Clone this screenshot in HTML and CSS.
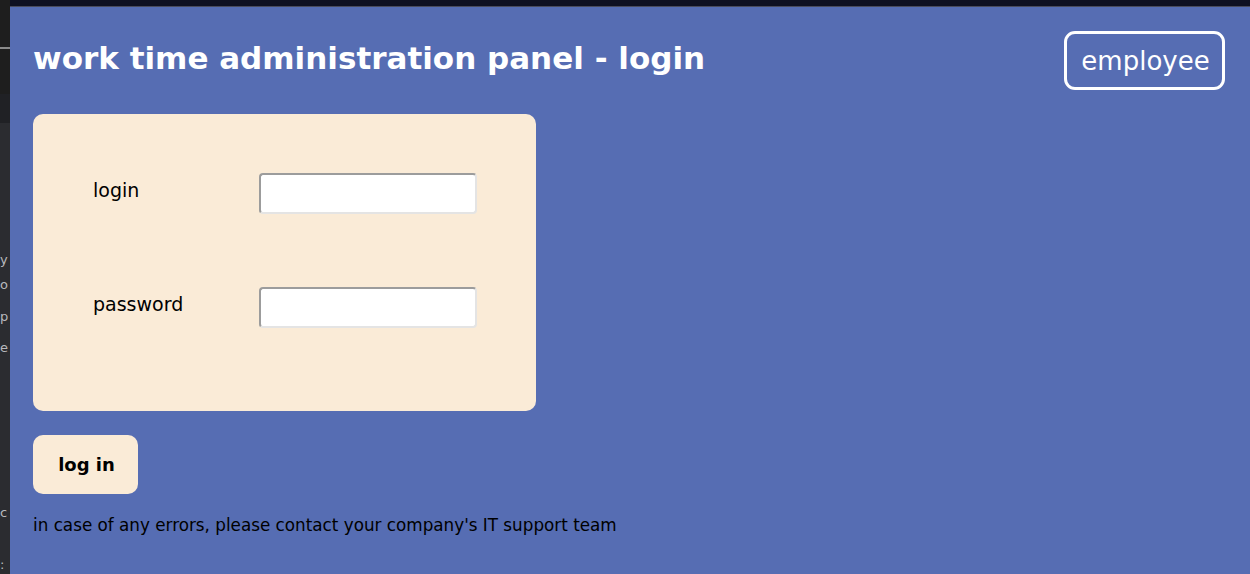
FILE: index.html
```html
<!DOCTYPE html>
<html lang="en">
<head>
<meta charset="utf-8">
<title>work time administration panel - login</title>
<link rel="stylesheet" href="styles.css">
</head>
<body>
<div class="frame">
  <aside class="backdrop">
    <div class="bd-a"></div>
    <div class="bd-b"></div>
    <div class="bd-c"></div>
    <div class="bd-d">
      <span class="frag f1">y</span>
      <span class="frag f2">o</span>
      <span class="frag f3">p</span>
      <span class="frag f4">e</span>
      <span class="frag f5">c</span>
      <span class="frag f6">:</span>
    </div>
  </aside>
  <div class="topbar"></div>
  <main class="panel">
    <header class="head">
      <h1 class="title">work time administration panel - login</h1>
      <button class="role" type="button">employee</button>
    </header>
    <form class="form">
      <div class="card">
        <label class="lbl" for="login">login</label>
        <input class="field" id="login" type="text">
        <label class="lbl" for="password">password</label>
        <input class="field" id="password" type="password">
      </div>
      <button class="submit" type="button">log in</button>
    </form>
    <p class="note">in case of any errors, please contact your company's IT support team</p>
  </main>
</div>
</body>
</html>
```

FILE: styles.css
```css
html, body {
  margin: 0;
  padding: 0;
  height: 100%;
  overflow: hidden;
}

body {
  background: #2b2c30;
  font-family: "Comic Sans MS", "DejaVu Sans", sans-serif;
}

.frame {
  display: grid;
  grid-template-columns: 10px 1fr;
  grid-template-rows: 7px 1fr;
  height: 574px;
}

.backdrop {
  grid-row: 1 / 3;
  grid-column: 1;
  display: flex;
  flex-direction: column;
  overflow: hidden;
}

.bd-a {
  height: 49px;
  background: #1e1e1e;
  border-bottom: 2px solid #8a8a8a;
}

.bd-b {
  height: 48px;
  background: #1e1e1e;
}

.bd-c {
  height: 30px;
  background: #202125;
}

.bd-d {
  flex: 1;
  background: #2b2c30;
  display: flex;
  flex-direction: column;
  align-items: flex-start;
  font-family: "DejaVu Sans", sans-serif;
  font-size: 13px;
  color: #b8b9bd;
  line-height: 18px;
}

.frag { display: block; }
.f1 { margin-top: 128px; }
.f2 { margin-top: 7px; }
.f3 { margin-top: 14px; }
.f4 { margin-top: 13px; }
.f5 { margin-top: 147px; }
.f6 { margin-top: 34px; }

.topbar {
  grid-row: 1;
  grid-column: 2;
  background: #0f1121;
  border-bottom: 1px solid #4a4c5c;
}

.panel {
  grid-row: 2;
  grid-column: 2;
  background: #566db3;
  padding: 0 25px 0 23px;
  display: flex;
  flex-direction: column;
  align-items: flex-start;
}

.head {
  align-self: stretch;
  display: flex;
  justify-content: space-between;
  align-items: center;
  padding-top: 24px;
  height: 59px;
}

.title {
  margin: 0;
  color: #fff;
  font-size: 31px;
  font-weight: bold;
  line-height: 40px;
  padding-bottom: 6px;
}

.role {
  box-sizing: border-box;
  width: 161px;
  height: 59px;
  border: 3px solid #fff;
  border-radius: 11px;
  background: transparent;
  color: #fff;
  font-family: inherit;
  font-size: 26px;
  padding: 0 0 0 2px;
}

.form {
  display: flex;
  flex-direction: column;
  align-items: flex-start;
  margin-top: 24px;
}

.card {
  box-sizing: border-box;
  width: 503px;
  height: 297px;
  background: #faebd7;
  border-radius: 10px;
  padding: 59px 59px 0 60px;
  display: grid;
  grid-template-columns: 166px 218px;
  grid-auto-rows: 41px;
  row-gap: 73px;
  align-items: center;
}

.lbl {
  font-size: 19px;
  color: #000;
  margin-top: -8px;
}

.field {
  box-sizing: border-box;
  width: 218px;
  height: 41px;
  margin: 0;
  background: #fff;
  border: 2px solid;
  border-color: #9c9c9c #e4e4e4 #e4e4e4 #9c9c9c;
  border-radius: 4px;
  font-family: inherit;
  font-size: 16px;
}

.submit {
  box-sizing: border-box;
  width: 105px;
  height: 59px;
  margin-top: 24px;
  border: 0;
  border-radius: 10px;
  background: #faebd7;
  color: #000;
  font-family: inherit;
  font-size: 18px;
  font-weight: bold;
  padding: 0 0 0 2px;
}

.note {
  margin: 20px 0 0;
  color: #000;
  font-size: 16.8px;
  line-height: 22px;
}
```
